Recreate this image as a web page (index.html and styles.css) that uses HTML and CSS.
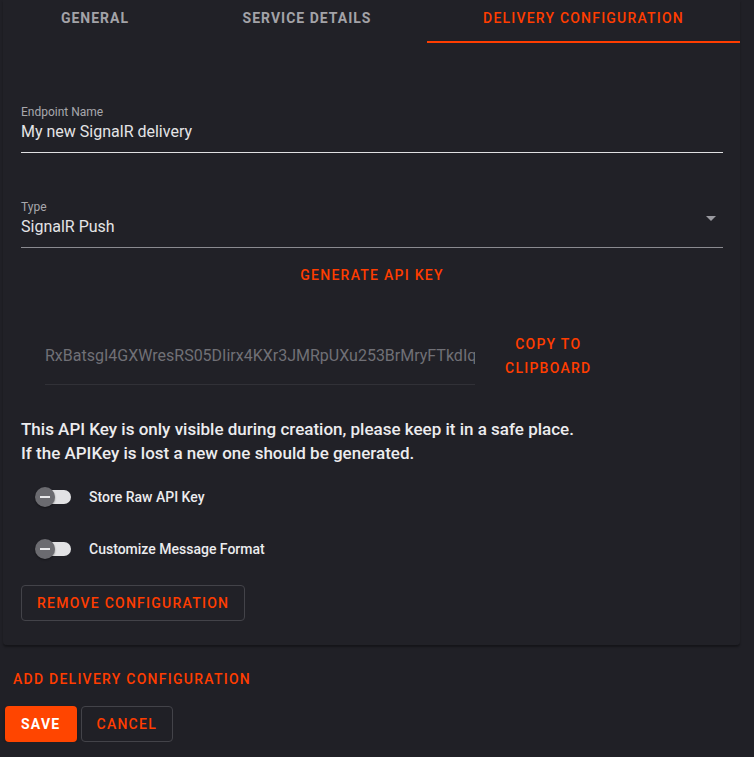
FILE: index.html
```html
<!DOCTYPE html>
<html lang="en">
<head>
  <meta charset="UTF-8" />
  <title>Delivery Configuration</title>
  <link rel="stylesheet" href="styles.css">
</head>
<body>
  <div class="card">
    <div class="tabs">
      <div class="tab tab-general">General</div>
      <div class="tab tab-service">Service Details</div>
      <div class="tab tab-delivery active">Delivery Configuration</div>
    </div>

    <div class="panel">
      <div class="field field-name">
        <label class="field-label">Endpoint Name</label>
        <div class="field-input">My new SignalR delivery</div>
      </div>

      <div class="field field-type">
        <label class="field-label">Type</label>
        <div class="field-input">SignalR Push</div>
        <svg class="select-arrow" viewBox="0 0 24 24" width="24" height="24">
          <path d="M7 10l5 5 5-5z" fill="#9a9aa0"/>
        </svg>
      </div>

      <div class="center-row">
        <button class="text-btn">Generate API Key</button>
      </div>

      <div class="key-row">
        <div class="key-field">
          <div class="key-input">RxBatsgI4GXWresRS05DIirx4KXr3JMRpUXu253BrMryFTkdIqPz7</div>
        </div>
        <button class="text-btn copy-btn">Copy to<br>Clipboard</button>
      </div>

      <p class="notice">
        This API Key is only visible during creation, please keep it in a safe place.<br>
        If the APIKey is lost a new one should be generated.
      </p>

      <div class="switch-row">
        <span class="switch"><span class="track"></span><span class="thumb"></span></span>
        <span class="switch-label">Store Raw API Key</span>
      </div>
      <div class="switch-row">
        <span class="switch"><span class="track"></span><span class="thumb"></span></span>
        <span class="switch-label">Customize Message Format</span>
      </div>

      <button class="outline-btn remove-btn">Remove Configuration</button>
    </div>
  </div>

  <button class="text-btn add-btn">Add Delivery Configuration</button>

  <div class="actions">
    <button class="filled-btn">Save</button>
    <button class="outline-btn">Cancel</button>
  </div>
</body>
</html>
```

FILE: styles.css
```css
body {
  font-family: Roboto, "Liberation Sans", sans-serif;
  background-color: #202026;
  margin: 0;
  color: #e4e4e6;
}
button {
  font-family: inherit;
  cursor: pointer;
}
.card {
  margin: 0 14px 0 3px;
  background-color: #212127;
  border-radius: 0 0 4px 4px;
  box-shadow: 0 2px 2px rgba(0,0,0,0.35), 0 0 1px rgba(255,255,255,0.06);
  padding-bottom: 24px;
}
.tabs {
  display: flex;
  height: 43px;
}
.tab {
  display: flex;
  align-items: flex-start;
  justify-content: center;
  padding-top: 10px;
  box-sizing: border-box;
  font-size: 14px;
  font-weight: 700;
  letter-spacing: 1px;
  text-transform: uppercase;
  color: #a3a3a8;
}
.tab-general { width: 184px; }
.tab-service { width: 240px; }
.tab-delivery { flex: 1; }
.tab.active {
  color: #ff3d00;
  font-weight: 500;
  letter-spacing: 1.2px;
  border-bottom: 2px solid #ff3d00;
}
.panel {
  padding: 0 17px 0 18px;
}
.field {
  position: relative;
  border-bottom: 1px solid #8a8a90;
  padding-bottom: 8px;
}
.field-name {
  margin-top: 61px;
  border-bottom-color: #e0e0e2;
}
.field-type {
  margin-top: 46px;
}
.field-label {
  display: block;
  font-size: 12px;
  line-height: 16px;
  color: #a8a8ad;
}
.field-input {
  font-size: 16px;
  line-height: 24px;
  color: #e4e4e6;
}
.select-arrow {
  position: absolute;
  right: 0;
  top: 7px;
}
.center-row {
  display: flex;
  justify-content: center;
  margin-top: 9px;
}
.text-btn {
  background: none;
  border: none;
  color: #ff3d00;
  font-size: 14px;
  font-weight: 500;
  letter-spacing: 1.25px;
  text-transform: uppercase;
  line-height: 24px;
  padding: 6px 8px;
  border-radius: 4px;
}
.key-row {
  display: flex;
  align-items: center;
  margin-top: 43px;
  padding-left: 24px;
}
.key-field {
  width: 430px;
  border-bottom: 1px solid #313137;
  padding: 8px 0 16px;
  overflow: hidden;
}
.key-input {
  font-size: 16px;
  line-height: 24px;
  color: #707076;
  white-space: nowrap;
}
.copy-btn {
  margin-left: 30px;
  margin-top: -9px;
  padding: 0;
}
.notice {
  margin: 32px 0 0;
  font-size: 17px;
  font-weight: 500;
  line-height: 24px;
  color: #ececee;
}
.switch-row {
  display: flex;
  align-items: center;
  height: 40px;
  margin-top: 12px;
  padding-left: 14px;
}
.switch-row + .switch-row {
  margin-top: 12px;
}
.switch {
  position: relative;
  width: 36px;
  height: 20px;
}
.track {
  position: absolute;
  left: 2px;
  top: 3px;
  width: 34px;
  height: 14px;
  border-radius: 7px;
  background-color: #e2e2e4;
}
.thumb {
  position: absolute;
  left: 0;
  top: 0;
  width: 20px;
  height: 20px;
  border-radius: 50%;
  background-color: #6b6b70;
  box-shadow: 0 1px 2px rgba(0,0,0,0.4);
}
.thumb::after {
  content: "";
  position: absolute;
  left: 5px;
  top: 9px;
  width: 10px;
  height: 2px;
  background-color: #e8e8ea;
}
.switch-label {
  margin-left: 18px;
  font-size: 14px;
  font-weight: 500;
  color: #ececee;
}
.outline-btn {
  background: none;
  border: 1px solid #434349;
  border-radius: 4px;
  color: #ff3d00;
  font-size: 14px;
  font-weight: 500;
  letter-spacing: 1.25px;
  text-transform: uppercase;
  line-height: 24px;
  padding: 5px 15px;
}
.remove-btn {
  margin-top: 16px;
}
.add-btn {
  margin: 16px 0 0 5px;
}
.actions {
  display: flex;
  gap: 4px;
  margin: 9px 0 0 5px;
}
.filled-btn {
  background-color: #ff4500;
  border: none;
  border-radius: 4px;
  color: #fff;
  font-size: 14px;
  font-weight: 700;
  letter-spacing: 1.25px;
  text-transform: uppercase;
  line-height: 24px;
  padding: 6px 16px;
  box-shadow: 0 2px 3px rgba(0,0,0,0.3);
}
```
